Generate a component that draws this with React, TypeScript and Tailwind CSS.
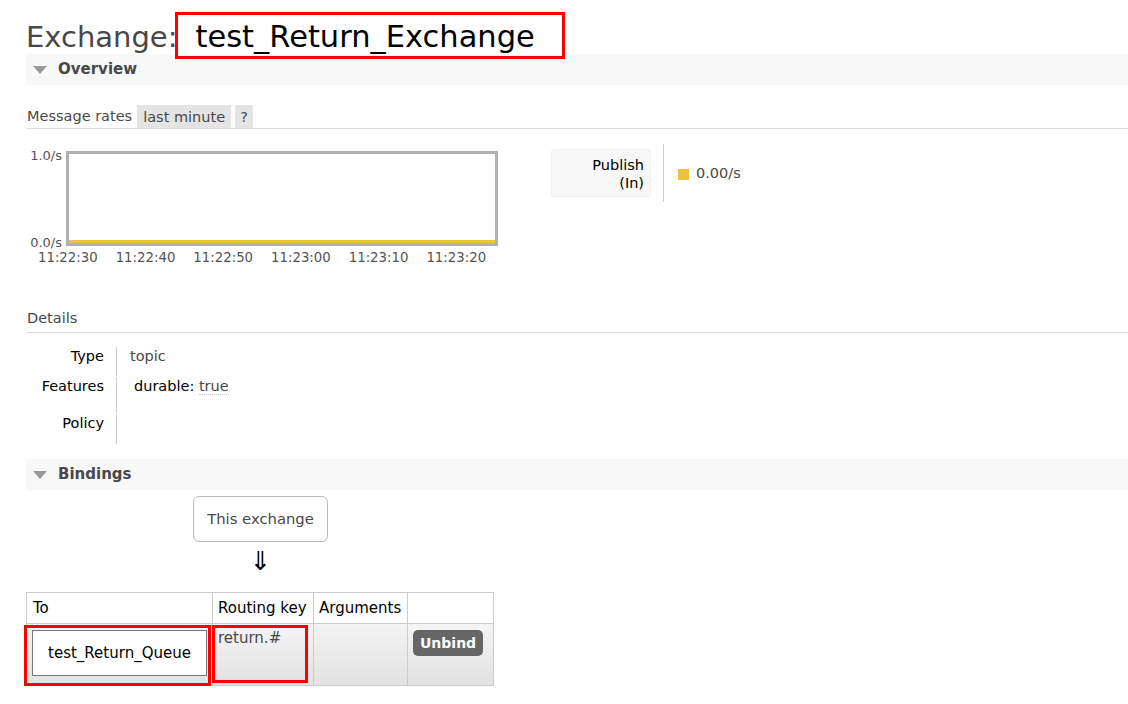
import { ReactNode } from "react";

const font = { fontFamily: '"DejaVu Sans", Verdana, sans-serif' };

function SectionHeader({ title }: { title: string }) {
  return (
    <div className="flex items-center h-[31px] bg-[#f8f8f8] pl-[7px]">
      <svg width="14" height="8" viewBox="0 0 14 8" className="mr-[11px]">
        <polygon points="0,0 14,0 7,8" fill="#999" />
      </svg>
      <span className="text-[15px] font-bold text-[#484848]">{title}</span>
    </div>
  );
}

function RedBox({ className }: { className: string }) {
  return <div className={`absolute border-[3px] border-[#ff0000] pointer-events-none ${className}`} />;
}

function DetailRow({ label, children, h }: { label: string; children?: ReactNode; h: string }) {
  return (
    <div className={`flex ${h}`}>
      <div className="w-[90px] pr-[12px] text-right text-[#000]">{label}</div>
      <div className="border-l border-[#ccc] pl-[13px] text-[#484848]">{children}</div>
    </div>
  );
}

export default function App() {
  const times = ["11:22:30", "11:22:40", "11:22:50", "11:23:00", "11:23:10", "11:23:20"];

  return (
    <div className="bg-white w-[1128px] h-[704px] overflow-hidden pl-[26px] text-[14.5px] text-[#484848]" style={font}>
      {/* title */}
      <div className="h-[54px] pt-[12px]">
        <div className="flex items-center h-[47px] relative z-10">
          <span className="text-[29px] text-[#484848] leading-none pt-[4px]">Exchange:</span>
          <div className="-ml-[2px] h-[47px] w-[390px] border-[3px] border-[#ff0000] flex items-center pl-[17px] pt-[3px]">
            <span className="text-[30.5px] text-black leading-none">test_Return_Exchange</span>
          </div>
        </div>
      </div>

      <SectionHeader title="Overview" />

      {/* message rates */}
      <div className="mt-[20px] flex items-end border-b border-[#ddd] h-[24px]">
        <span className="pb-[0px] pl-[1px]">Message rates</span>
        <span className="ml-[5px] bg-[#e4e4e4] h-[23px] px-[6px] pt-[2px] flex items-center">last minute</span>
        <span className="ml-[4px] bg-[#e4e4e4] h-[23px] w-[18px] pt-[2px] flex items-center justify-center">?</span>
      </div>

      <div className="flex">
        {/* chart */}
        <div className="w-[525px] pt-[16px]">
          <div className="flex">
            <div className="w-[40px] h-[104px] flex flex-col justify-between text-[13px] text-[#545454] text-right pr-[4px] leading-none">
              <span className="pt-[4px]">1.0/s</span>
              <span className="pb-[0px]">0.0/s</span>
            </div>
            <div className="w-[432px] h-[95px] mt-[6px] border-[3px] border-[#b0b0b0] flex flex-col justify-end">
              <div className="h-[3px] bg-[#edc240]" />
            </div>
          </div>
          <div className="flex ml-[3px] mt-[2px] text-[13.3px] text-[#545454] leading-none">
            {times.map((t) => (
              <span key={t} className="w-[77.7px] text-center">{t}</span>
            ))}
          </div>
        </div>

        {/* legend */}
        <div className="flex pt-[15px]">
          <div className="w-[100px] h-[48px] mt-[5px] bg-[#f8f8f8] rounded-[3px] border border-[#f0f0f0] text-right pr-[6px] pt-[6px] leading-[18px] text-black text-[14.5px]">
            Publish
            <br />
            (In)
          </div>
          <div className="ml-[12px] border-l border-[#ccc] h-[58px] flex items-center pl-[14px] pt-[2px]">
            <span className="w-[11px] h-[11px] bg-[#edc240] mr-[7px]" />
            <span className="text-[14.5px]">0.00/s</span>
          </div>
        </div>
      </div>

      {/* details */}
      <div className="mt-[44px] border-b border-[#ddd] pb-[2px] pl-[1px]">Details</div>
      <div className="mt-[13px] leading-[18px]">
        <DetailRow label="Type" h="h-[30px] pt-[1px]">topic</DetailRow>
        <DetailRow label="Features" h="h-[37px] pt-[1px]">
          <span className="pl-[4px] text-black">durable:</span> <span className="border-b border-dotted border-[#ccc]">true</span>
        </DetailRow>
        <DetailRow label="Policy" h="h-[31px] pt-[1px]" />
      </div>

      <div className="mt-[15px]">
        <SectionHeader title="Bindings" />
      </div>

      {/* this exchange */}
      <div className="ml-[167px] w-[135px] mt-[6px] h-[46px] border border-[#bbb] rounded-[6px] flex items-center justify-center text-[14.8px]">
        This exchange
      </div>
      <div className="ml-[167px] w-[135px] mt-[4px] text-center text-[26px] leading-[30px] text-black">⇓</div>

      {/* table */}
      <table className="mt-[16px] border-collapse text-[15px]">
        <thead>
          <tr className="h-[31px]">
            <th className="w-[186px] border border-[#ccc] text-left font-normal text-black px-[6px]">To</th>
            <th className="w-[101px] border border-[#ccc] text-left font-normal text-black px-[5px]">Routing key</th>
            <th className="w-[94px] border border-[#ccc] text-left font-normal text-black px-[5px]">Arguments</th>
            <th className="w-[86px] border border-[#ccc]" />
          </tr>
        </thead>
        <tbody>
          <tr className="h-[62px] bg-gradient-to-b from-[#f4f4f4] to-[#e2e2e2]">
            <td className="relative border border-[#ccc] p-0 align-top">
              <div className="mx-[5px] mt-[6px] h-[46px] bg-white border border-[#777] flex items-center justify-center text-black">
                test_Return_Queue
              </div>
              <RedBox className="-left-[3px] top-[1px] w-[187px] h-[61px]" />
            </td>
            <td className="relative border border-[#ccc] align-top px-[5px] pt-[3px] text-[#484848]">
              return.#
              <RedBox className="-left-[1px] top-[1px] w-[96px] h-[58px]" />
            </td>
            <td className="border border-[#ccc]" />
            <td className="border border-[#ccc] align-top pt-[6px] pl-[5px]">
              <span className="inline-block bg-[#666] text-white font-bold rounded-[5px] px-[7px] h-[26px] leading-[26px] text-[14px]">Unbind</span>
            </td>
          </tr>
        </tbody>
      </table>
    </div>
  );
}
